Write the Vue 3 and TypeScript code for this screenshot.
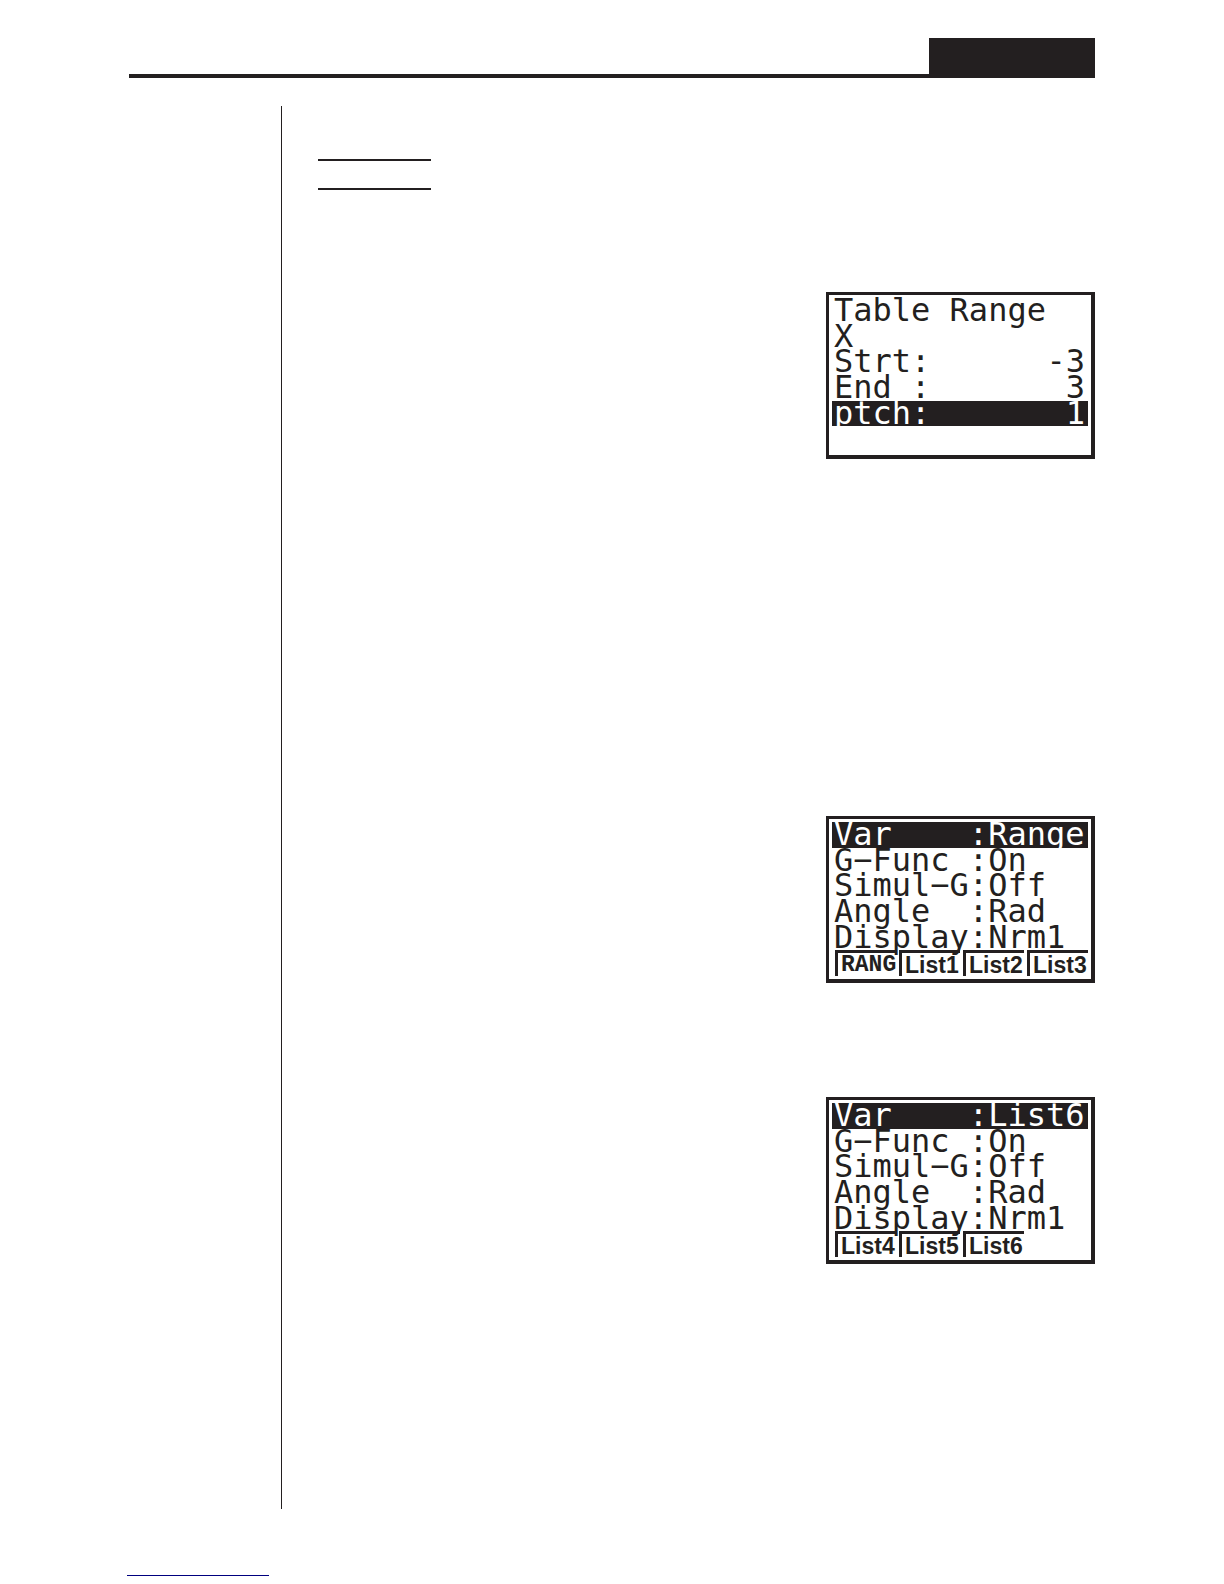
<script setup lang="ts">
interface Row {
  label: string
  value?: string
  active?: boolean
}

interface Screen {
  id: string
  title: string
  rows: Row[]
  keys: string[]
}

const setup = (variable: string): Row[] => [
  { label: 'Var    :' + variable, active: true },
  { label: 'G−Func :On' },
  { label: 'Simul−G:Off' },
  { label: 'Angle  :Rad' },
  { label: 'Display:Nrm1' },
]

const screens: Screen[] = [
  {
    id: 'range',
    title: 'Table range',
    rows: [
      { label: 'Table Range' },
      { label: 'X' },
      { label: 'Strt:', value: '-3' },
      { label: 'End :', value: '3' },
      { label: 'ptch:', value: '1', active: true },
    ],
    keys: [],
  },
  {
    id: 'setup-range',
    title: 'Set up with range',
    rows: setup('Range'),
    keys: ['RANG', 'List1', 'List2', 'List3'],
  },
  {
    id: 'setup-list',
    title: 'Set up with list',
    rows: setup('List6'),
    keys: ['List4', 'List5', 'List6'],
  },
]
</script>

<template>
  <div class="page">
    <header class="header">
      <div class="header-tab"></div>
    </header>
    <div class="body">
      <aside class="margin"></aside>
      <main class="content">
        <div class="example"></div>
        <figure
          v-for="screen in screens"
          :key="screen.id"
          class="lcd"
          :class="screen.id"
          :aria-label="screen.title"
        >
          <div
            v-for="row in screen.rows"
            :key="row.label"
            class="row"
            :class="{ active: row.active }"
          >
            <span>{{ row.label }}</span>
            <span v-if="row.value">{{ row.value }}</span>
          </div>
          <div v-if="screen.keys.length" class="keys">
            <span
              v-for="name in screen.keys"
              :key="name"
              class="key"
              :class="{ caps: name === 'RANG' }"
            >{{ name }}</span>
          </div>
        </figure>
      </main>
    </div>
    <footer class="footer">
      <div class="footer-rule"></div>
    </footer>
  </div>
</template>

<style>
body {
  margin: 0;
  background: #fff;
}
</style>

<style scoped>
.page {
  --ink: #231f20;
  box-sizing: border-box;
  padding: 38px 129px 8px;
  color: var(--ink);
}
.header {
  display: flex;
  justify-content: flex-end;
  border-bottom: 4px solid var(--ink);
}
.header-tab {
  width: 166px;
  height: 36px;
  background: var(--ink);
}
.body {
  display: flex;
  margin-top: 28px;
}
.margin {
  flex: 0 0 152px;
}
.content {
  flex: 1;
  display: flex;
  flex-direction: column;
  align-items: flex-end;
  border-left: 1px solid var(--ink);
  padding: 53px 0 245px 36px;
}
.example {
  align-self: flex-start;
  box-sizing: border-box;
  width: 113px;
  height: 31px;
  border: solid var(--ink);
  border-width: 2px 0;
}
.lcd {
  box-sizing: border-box;
  display: grid;
  grid-template-rows: repeat(6, 1fr);
  width: 269px;
  height: 167px;
  margin: 0;
  padding: 3px;
  border: solid var(--ink);
  border-width: 3px 4px 4px 3px;
  font-family: "DejaVu Sans Mono", "Liberation Mono", monospace;
  font-size: 32px;
  line-height: 24px;
}
.range {
  margin-top: 102px;
}
.setup-range {
  margin-top: 357px;
}
.setup-list {
  margin-top: 114px;
}
.row {
  display: flex;
  justify-content: space-between;
  min-height: 0;
  padding: 0 3px 0 2px;
  white-space: pre;
}
.active {
  background: var(--ink);
  color: #fff;
}
.keys {
  display: grid;
  grid-template-columns: repeat(4, 1fr);
  column-gap: 3px;
  min-height: 0;
  padding-left: 3px;
}
.key {
  min-width: 0;
  min-height: 0;
  border: solid var(--ink);
  border-width: 3px 0 0 3px;
  padding-left: 3px;
  font: bold 23px/24px "Liberation Sans", Arial, sans-serif;
}
.caps {
  font-family: "Liberation Mono", monospace;
}
.footer {
  margin: 66px 0 0 -2px;
}
.footer-rule {
  width: 142px;
  height: 1px;
  background: #00007f;
}
</style>
